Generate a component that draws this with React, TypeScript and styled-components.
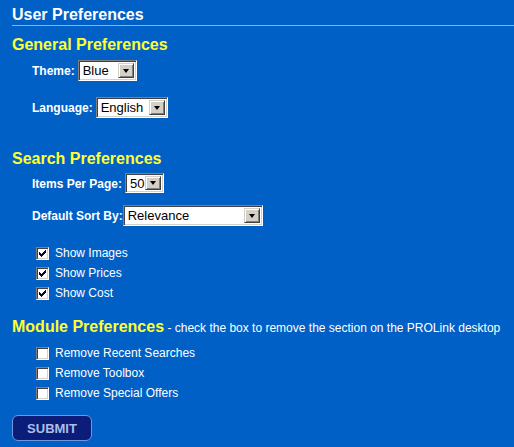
import React from 'react';
import styled, { createGlobalStyle } from 'styled-components';

const GlobalStyle = createGlobalStyle`
    html, body {
        margin: 0;
        padding: 0;
        background: #0060c6;
    }
    body {
        font-family: 'Liberation Sans', Arial, sans-serif;
        color: #fff;
    }
`;

const Page = styled.div`
    padding: 6px 0 12px 12px;
`;

const Title = styled.h1`
    margin: 0;
    font-size: 16px;
    line-height: 18px;
    font-weight: bold;
    color: #fff;
    padding-bottom: 1px;
    border-bottom: 1px solid #86b2ee;
`;

const Heading = styled.h2<{ $top: number }>`
    margin: ${(p) => p.$top}px 0 0 0;
    font-size: 16px;
    line-height: 18px;
    font-weight: bold;
    color: #ffff33;
`;

const Note = styled.span`
    font-size: 12px;
    font-weight: normal;
    color: #fff;
`;

const FieldRow = styled.div<{ $top: number; $gap?: number }>`
    display: flex;
    align-items: baseline;
    gap: ${(p) => p.$gap ?? 3}px;
    margin-top: ${(p) => p.$top}px;
    padding-left: 20px;
`;

const Label = styled.label`
    font-size: 12px;
    font-weight: bold;
    color: #fff;
`;

const SelectBox = styled.div<{ $width: number; $height: number }>`
    box-sizing: border-box;
    display: inline-flex;
    align-items: baseline;
    width: ${(p) => p.$width}px;
    height: ${(p) => p.$height}px;
    background: #fff;
    border: 1px solid;
    border-color: #808080 #ffffff #ffffff #808080;
    box-shadow: inset 1px 1px 0 #404040, inset -1px -1px 0 #d4d0c8;
    padding: 2px 2px 2px 4px;
    position: relative;
`;

const SelectText = styled.span`
    flex: 1;
    font-size: 13px;
    line-height: 16px;
    color: #000;
`;

const ArrowButton = styled.span`
    position: absolute;
    top: 2px;
    right: 2px;
    bottom: 2px;
    width: 16px;
    box-sizing: border-box;
    background: #d4d0c8;
    border: 1px solid;
    border-color: #d4d0c8 #404040 #404040 #d4d0c8;
    box-shadow: inset 1px 1px 0 #ffffff, inset -1px -1px 0 #808080;
    display: flex;
    align-items: center;
    justify-content: center;

    &::after {
        content: '';
        width: 0;
        height: 0;
        border-left: 3.5px solid transparent;
        border-right: 3.5px solid transparent;
        border-top: 4px solid #000;
    }
`;

const CheckList = styled.div<{ $top: number }>`
    margin-top: ${(p) => p.$top}px;
    padding-left: 24px;
`;

const CheckRow = styled.label`
    display: flex;
    align-items: center;
    gap: 6px;
    height: 20px;
    font-size: 12px;
    color: #fff;
`;

const Box = styled.span`
    box-sizing: border-box;
    width: 13px;
    height: 13px;
    flex: none;
    background: #fff;
    border: 1px solid;
    border-color: #808080 #ffffff #ffffff #808080;
    box-shadow: inset 1px 1px 0 #404040, inset -1px -1px 0 #d4d0c8;
    display: flex;
    align-items: center;
    justify-content: center;
`;

const SubmitButton = styled.button`
    margin-top: 12px;
    width: 80px;
    height: 26px;
    background: #0b1d78;
    border: 1px solid #6e98de;
    border-radius: 6px;
    color: #a9bfea;
    font-family: 'Liberation Sans', Arial, sans-serif;
    font-size: 13px;
    font-weight: bold;
    padding: 0;
    cursor: pointer;
`;

const Select = ({ value, width, height = 21 }: { value: string; width: number; height?: number }) => (
    <SelectBox $width={width} $height={height}>
        <SelectText>{value}</SelectText>
        <ArrowButton />
    </SelectBox>
);

const Check = ({ label, checked }: { label: string; checked?: boolean }) => (
    <CheckRow>
        <Box>
            {checked && (
                <svg width="7" height="7" viewBox="0 0 7 7" shapeRendering="crispEdges">
                    <path
                        d="M6 0h1v3h-1v1h-1v1h-1v1h-1v1h-1v-1h-1v-1h-1v-3h1v1h1v1h1v-1h1v-1h1z"
                        fill="#0a0a30"
                    />
                </svg>
            )}
        </Box>
        {label}
    </CheckRow>
);

const App = () => (
    <>
        <GlobalStyle />
        <Page>
            <Title>User Preferences</Title>

            <Heading $top={10}>General Preferences</Heading>
            <FieldRow $top={6}>
                <Label>Theme:</Label>
                <Select value="Blue" width={59} />
            </FieldRow>
            <FieldRow $top={16}>
                <Label>Language:</Label>
                <Select value="English" width={72} />
            </FieldRow>

            <Heading $top={32}>Search Preferences</Heading>
            <FieldRow $top={5}>
                <Label>Items Per Page:</Label>
                <Select value="50" width={39} height={20} />
            </FieldRow>
            <FieldRow $top={12} $gap={0}>
                <Label>Default Sort By:</Label>
                <Select value="Relevance" width={140} />
            </FieldRow>
            <CheckList $top={17}>
                <Check label="Show Images" checked />
                <Check label="Show Prices" checked />
                <Check label="Show Cost" checked />
            </CheckList>

            <Heading $top={15}>
                Module Preferences
                <Note> - check the box to remove the section on the PROLink desktop</Note>
            </Heading>
            <CheckList $top={6}>
                <Check label="Remove Recent Searches" />
                <Check label="Remove Toolbox" />
                <Check label="Remove Special Offers" />
            </CheckList>

            <SubmitButton type="button">SUBMIT</SubmitButton>
        </Page>
    </>
);

export default App;
